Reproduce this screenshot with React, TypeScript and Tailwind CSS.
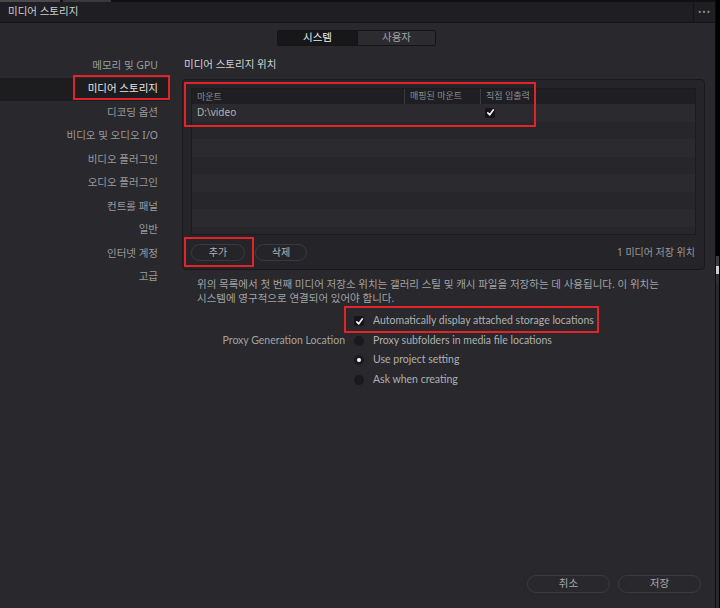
import React from "react";

const sidebarItems = [
  "메모리 및 GPU",
  "미디어 스토리지",
  "디코딩 옵션",
  "비디오 및 오디오 I/O",
  "비디오 플러그인",
  "오디오 플러그인",
  "컨트롤 패널",
  "일반",
  "인터넷 계정",
  "고급",
];

const font = "font-['Noto_Sans','Noto_Sans_CJK_KR',sans-serif]";

function Check() {
  return (
    <span className="flex h-[10px] w-[10px] items-center justify-center rounded-[2px] bg-[#151517]">
      <svg width="9" height="9" viewBox="0 0 10 10">
        <path d="M2 5.4 L4.2 7.6 L8.2 2" fill="none" stroke="#f2f2f2" strokeWidth="1.8" strokeLinecap="round" strokeLinejoin="round" />
      </svg>
    </span>
  );
}

function Radio({ on }: { on?: boolean }) {
  return (
    <span className="flex h-[10px] w-[10px] items-center justify-center rounded-full bg-[#1a1a1d]">
      {on && <span className="h-[4px] w-[4px] rounded-full bg-white" />}
    </span>
  );
}

export default function App() {
  const rows = Array.from({ length: 8 });

  return (
    <div className={`relative flex h-[608px] w-[720px] overflow-hidden bg-black ${font}`}>
      <div className="flex w-[716px] flex-col border-r border-[#0c0c0e] bg-[#28282d]">
        {/* top strip of the app behind */}
        <div className="flex h-[2px] bg-[#121214]">
          <div className="w-[60px] bg-[#4a4a4d]" />
          <div className="ml-[3px] w-[48px] bg-[#3a3a3d]" />
        </div>

        {/* title bar */}
        <div className="flex h-[21px] items-center border-b border-[#151517] bg-[#1f1f23]">
          <span className="pl-[8px] text-[10.5px] text-[#cfcfcf]">미디어 스토리지</span>
          <div className="ml-auto flex h-full w-[22px] items-center justify-center border-l border-[#141416] text-[9px] tracking-[1px] text-[#8a8a8a]">
            •••
          </div>
        </div>

        {/* tabs */}
        <div className="mt-[7px] flex justify-center pr-[2px]">
          <div className="flex h-[16px] overflow-hidden rounded-[2px] border border-[#151517] text-[10.5px]">
            <div className="flex w-[79px] items-center justify-center bg-[#17171a] text-[#ececec]">시스템</div>
            <div className="flex w-[78px] items-center justify-center border-l border-[#151517] bg-[#2b2b30] text-[#a3a3a3]">사용자</div>
          </div>
        </div>

        <div className="mt-[8px] flex flex-1">
          {/* sidebar */}
          <div className="w-[182px]">
            {sidebarItems.map((item, i) => (
              <div
                key={item}
                className={`flex h-[23.5px] w-[170px] items-center justify-end pr-[12px] text-[10.5px] ${
                  i === 1 ? "bg-[#1d1d20] text-[#e6e6e6]" : "text-[#9b9b9b]"
                }`}
              >
                {item}
              </div>
            ))}
          </div>

          {/* main */}
          <div className="flex w-[523px] flex-col">
            <div className="flex h-[25px] items-center pb-[3px] pl-[2px] text-[10.5px] text-[#d2d2d2]">미디어 스토리지 위치</div>

            <div className="flex h-[191px] flex-col rounded-[4px] border border-[#19191c] bg-[#252529] px-[8px] pt-[8px]">
              <div className="flex h-[147px] w-[505px] flex-col overflow-hidden border border-[#1c1c1f]">
                <div className="flex h-[15px] shrink-0 items-center bg-[#1f1f23] text-[9px] text-[#8c8c8c]">
                  <div className="w-[212px] pl-[5px]">마운트</div>
                  <div className="h-full w-[76px] border-l border-[#3a3a3f] pl-[5px] leading-[14px]">매핑된 마운트</div>
                  <div className="h-full flex-1 border-l border-[#3a3a3f] pl-[5px] leading-[14px]">직접 입출력</div>
                </div>
                {rows.map((_, i) => (
                  <div
                    key={i}
                    className={`flex h-[17.5px] shrink-0 items-center text-[10px] ${
                      i % 2 === 0 ? "bg-[#2a2a2f]" : "bg-[#27272b]"
                    }`}
                  >
                    {i === 0 && (
                      <>
                        <div className="w-[288px] pl-[5px] text-[#b3b3b3]">D:\video</div>
                        <div className="pl-[5px]">
                          <Check />
                        </div>
                      </>
                    )}
                  </div>
                ))}
              </div>

              <div className="mt-[8px] flex h-[18px] items-center">
                <button className="flex h-[17px] w-[54px] items-center justify-center rounded-full border border-[#3a3a3f] text-[10px] text-[#b4b4b4]">
                  추가
                </button>
                <button className="ml-[10px] flex h-[17px] w-[52px] items-center justify-center rounded-full border border-[#3a3a3f] text-[10px] text-[#b4b4b4]">
                  삭제
                </button>
                <span className="ml-auto pr-[1px] text-[10px] text-[#9a9a9a]">1 미디어 저장 위치</span>
              </div>
            </div>

            <p className="mt-[7px] pl-[15px] text-[10.5px] leading-[14px] text-[#a3a3a3]">
              위의 목록에서 첫 번째 미디어 저장소 위치는 갤러리 스틸 및 캐시 파일을 저장하는 데 사용됩니다. 이 위치는
              <br />
              시스템에 영구적으로 연결되어 있어야 합니다.
            </p>

            <div className="mt-[6px] flex flex-col font-['Lato','Noto_Sans',sans-serif] text-[10.5px] text-[#b0b0b0]">
              <div className="flex h-[20px] items-center">
                <div className="w-[172px]" />
                <Check />
                <span className="ml-[9px]">Automatically display attached storage locations</span>
              </div>
              <div className="flex h-[19.5px] items-center">
                <div className="w-[164px] pr-[1px] text-right text-[#a3a3a3]">Proxy Generation Location</div>
                <div className="w-[8px]" />
                <Radio />
                <span className="ml-[9px]">Proxy subfolders in media file locations</span>
              </div>
              <div className="flex h-[19.5px] items-center">
                <div className="w-[172px]" />
                <Radio on />
                <span className="ml-[9px]">Use project setting</span>
              </div>
              <div className="flex h-[19.5px] items-center">
                <div className="w-[172px]" />
                <Radio />
                <span className="ml-[9px]">Ask when creating</span>
              </div>
            </div>
          </div>
        </div>

        {/* footer buttons */}
        <div className="flex justify-end gap-[8px] pb-[15px] pr-[14px]">
          <button className="flex h-[18px] w-[83px] items-center justify-center rounded-full border border-[#3a3a3f] text-[10.5px] text-[#a8a8a8]">
            취소
          </button>
          <button className="flex h-[18px] w-[83px] items-center justify-center rounded-full border border-[#3a3a3f] text-[10.5px] text-[#a8a8a8]">
            저장
          </button>
        </div>
      </div>

      {/* sliver of the window behind */}
      <div className="flex w-[3px] flex-col">
        <div className="h-[256px] bg-black" />
        <div className="h-[10px] bg-[#3c3c40]" />
        <div className="h-[8px] bg-[#cfcfcf]" />
        <div className="h-[10px] bg-[#2e2e32]" />
        <div className="flex-1 bg-[#28282d]" />
      </div>

      {/* red annotation boxes */}
      <div className="pointer-events-none absolute left-[73px] top-[75px] h-[25px] w-[97px] border-2 border-[#e3232a]" />
      <div className="pointer-events-none absolute left-[184px] top-[82px] h-[45px] w-[352px] border-2 border-[#e3232a]" />
      <div className="pointer-events-none absolute left-[184px] top-[237px] h-[30px] w-[70px] border-2 border-[#e3232a]" />
      <div className="pointer-events-none absolute left-[344px] top-[306px] h-[27px] w-[255px] border-2 border-[#e3232a]" />
    </div>
  );
}
